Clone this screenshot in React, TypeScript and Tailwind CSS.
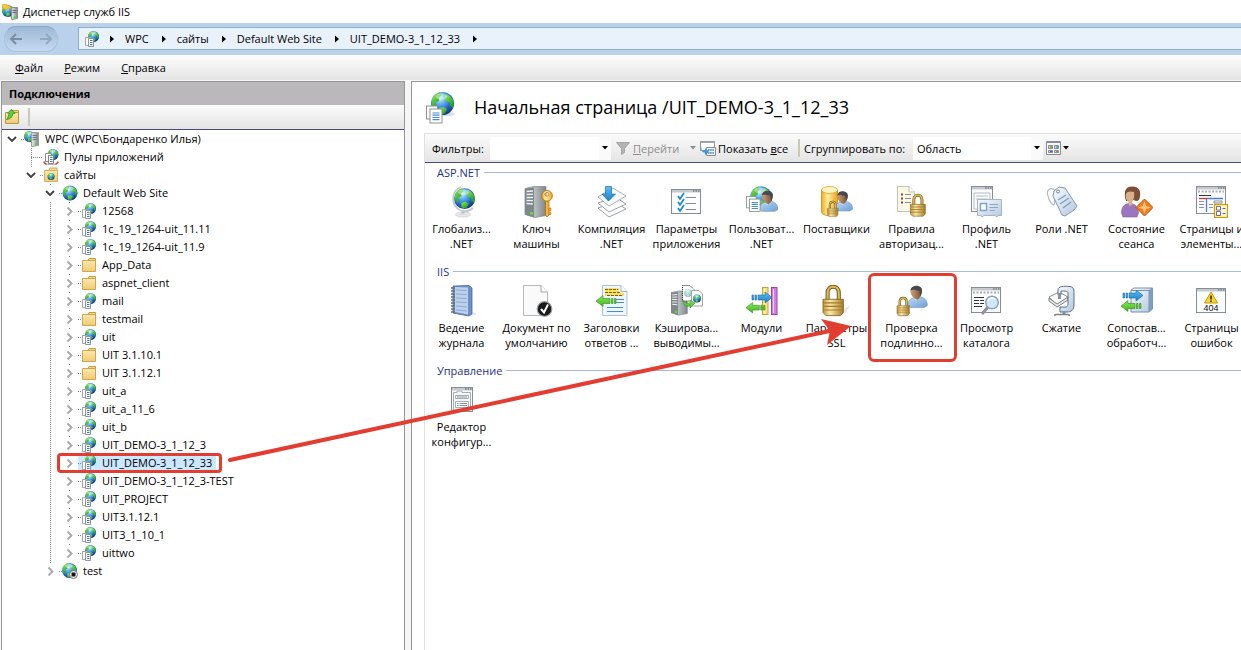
import React from 'react';
import clsx from 'clsx';

/* ---------- shared drawing parts ---------- */

const Defs = () => (
  <svg className="absolute w-0 h-0" aria-hidden="true">
    <defs>
      <radialGradient id="sea" cx="0.38" cy="0.28" r="0.8">
        <stop offset="0" stopColor="#d4f4ff" />
        <stop offset="0.35" stopColor="#55a8ee" />
        <stop offset="0.7" stopColor="#1f58b8" />
        <stop offset="1" stopColor="#122c70" />
      </radialGradient>
      <linearGradient id="land" x1="0" y1="0" x2="0.6" y2="1">
        <stop offset="0" stopColor="#8ff04a" />
        <stop offset="1" stopColor="#1f9a2a" />
      </linearGradient>
      <linearGradient id="gold" x1="0" y1="0" x2="1" y2="0">
        <stop offset="0" stopColor="#c39a3c" />
        <stop offset="0.35" stopColor="#fbe9a8" />
        <stop offset="1" stopColor="#a67c26" />
      </linearGradient>
      <linearGradient id="steel" x1="0" y1="0" x2="1" y2="0">
        <stop offset="0" stopColor="#eceeef" />
        <stop offset="0.5" stopColor="#b4b9bc" />
        <stop offset="1" stopColor="#7f868a" />
      </linearGradient>
      <linearGradient id="shirt" x1="0" y1="0" x2="1" y2="1">
        <stop offset="0" stopColor="#bcdcf6" />
        <stop offset="1" stopColor="#6d9fd4" />
      </linearGradient>
      <linearGradient id="skin" x1="0" y1="0" x2="1" y2="0">
        <stop offset="0" stopColor="#cda076" />
        <stop offset="1" stopColor="#7a5033" />
      </linearGradient>
      <linearGradient id="folder" x1="0" y1="0" x2="0" y2="1">
        <stop offset="0" stopColor="#fbe9ae" />
        <stop offset="1" stopColor="#f0cb70" />
      </linearGradient>
      <linearGradient id="azure" x1="0" y1="0" x2="0" y2="1">
        <stop offset="0" stopColor="#5cc0f2" />
        <stop offset="1" stopColor="#1a7fc8" />
      </linearGradient>
      <linearGradient id="lime" x1="0" y1="0" x2="0" y2="1">
        <stop offset="0" stopColor="#8ae85a" />
        <stop offset="1" stopColor="#3fb51e" />
      </linearGradient>
      <linearGradient id="amber" x1="0" y1="0" x2="1" y2="0">
        <stop offset="0" stopColor="#f5a920" />
        <stop offset="0.4" stopColor="#fff0a0" />
        <stop offset="1" stopColor="#f0a01a" />
      </linearGradient>
      <linearGradient id="glass" x1="0" y1="0" x2="1" y2="1">
        <stop offset="0" stopColor="#f8fbfe" />
        <stop offset="1" stopColor="#b2c9de" />
      </linearGradient>
    </defs>
  </svg>
);

type Part = { x: number; y: number; s?: number };

// unit globe, radius 10 round its own centre
const Globe = ({ x, y, s = 1 }: Part) => (
  <g transform={`translate(${x} ${y}) scale(${s})`}>
    <circle r="10" fill="url(#sea)" />
    <path d="M-9-4C-7-8-4-9.500-2-9.800L-1-7-3-5-3-2-6-1-5 2-7 4-9 1z" fill="url(#land)" />
    <path d="M3-8C7-7 9.600-3 9.800 0L9 4 7 3 6-1 3-2 2-5z" fill="url(#land)" />
    <path d="M-3 4L1 3 4 5 2 9-1 9.600-3 8z" fill="url(#land)" />
    <ellipse cx="-1" cy="-6" rx="5" ry="2.600" fill="#fff" opacity="0.4" />
  </g>
);

// head and shoulders, 19 x 21
const Person = ({ x, y, s = 1 }: Part) => (
  <g transform={`translate(${x} ${y}) scale(${s})`}>
    <path d="M0 18C0 14 3 12 6 11.500L12 10.500C16 11.500 19 14 19 19L16 21H2z" fill="url(#shirt)" stroke="#6c96c2" strokeWidth="0.600" />
    <path d="M5 11.500L8 14.500 12 10.500z" fill="#dcebf8" />
    <path d="M2.500 4C3-1 13-1 13.500 4 13.500 8 12.500 11 9.500 13.500 6.500 13.500 3 10 2.500 6z" fill="url(#skin)" />
    <path d="M2.500 4.500C3-2 13.500-1.500 13.800 4 13.800 7 13 9 12 10L11 5 5.500 3.500z" fill="#454a50" />
  </g>
);

// padlock, 20 x 30
const Lock = ({ x, y, s = 1 }: Part) => (
  <g transform={`translate(${x} ${y}) scale(${s})`}>
    <path d="M4.500 15V8C4.500-.5 15.500-.5 15.500 8V15" fill="none" stroke="#7e5c18" strokeWidth="4" />
    <path d="M4.500 15V8C4.500-.5 15.500-.5 15.500 8V15" fill="none" stroke="#dcbc62" strokeWidth="2" />
    <path d="M0 14H20V27L17 30H3L0 27z" fill="url(#gold)" stroke="#7e5c18" strokeWidth="0.800" />
    <path d="M0 17.500H20M0 21H20M0 24.500H20" stroke="#a27c2c" strokeWidth="1.200" />
  </g>
);

// two overlapping sheets, 16 x 17
const Sheets = ({ x, y, s = 1 }: Part) => (
  <g transform={`translate(${x} ${y}) scale(${s})`}>
    <rect x="0.500" y="0.500" width="11" height="13" fill="#fbfaf4" stroke="#8d9296" />
    <rect x="4" y="3.500" width="12" height="14" fill="#fff" stroke="#8d9296" />
    <path d="M6.500 7.500H13.500M6.500 9.700H13.500M6.500 12H13.500M6.500 14.200H13.500" stroke="#4b8ccb" strokeWidth="1.200" />
  </g>
);

const Tower = ({ x, y, s = 1 }: Part) => (
  <g transform={`translate(${x} ${y}) scale(${s})`}>
    <path d="M0 2L9 0H21V29L10 31 0 28z" fill="url(#steel)" stroke="#7e8488" strokeWidth="0.700" />
    <path d="M0 2L9 1V31L0 28z" fill="#80878b" />
    <path d="M1.500 5L8 4.500M1.500 8L8 7.700M1.500 11L8 11M1.500 14L8 14.200M1.500 17L8 17.500" stroke="#eef0f2" strokeWidth="1.300" />
    <rect x="5" y="25.500" width="3" height="2.500" fill="#59e234" />
  </g>
);

const Frame = ({ x, y, w, h }: { x: number; y: number; w: number; h: number }) => (
  <g>
    <rect x={x + 0.5} y={y + 0.5} width={w - 1} height={h - 1} fill="#fcfdfe" stroke="#878d95" />
    <rect x={x + 1} y={y + 1} width={w - 2} height="2.500" fill="#c5cad1" />
    <path d={`M${x + w - 8} ${y + 2}h1.500m1 0h1.500m1 0h1.500`} stroke="#4a5560" />
  </g>
);

const ArrowRight = ({ x, y, s = 1 }: Part) => (
  <g transform={`translate(${x} ${y}) scale(${s})`} fill="url(#azure)" stroke="#176aa8" strokeWidth="0.600">
    <path d="M0 3.500H1.500V8.500H0zM3 3.500H4.500V8.500H3zM6 3.500H13V0.500L20 6 13 11.500V8.500H6z" />
  </g>
);

const ArrowLeft = ({ x, y, s = 1 }: Part) => (
  <g transform={`translate(${x} ${y}) scale(${s})`} fill="url(#lime)" stroke="#2d8a18" strokeWidth="0.600">
    <path d="M20 3.500H18.500V8.500H20zM17 3.500H15.500V8.500H17zM14 3.500H7V0.500L0 6 7 11.500V8.500H14z" />
  </g>
);

/* ---------- 16px icons ---------- */

const small: Record<string, React.ReactNode> = {
  app: (
    <>
      <Globe x={9.5} y={5.5} s={0.55} />
      <path d="M1.500 6.500H6.500V14.500H1.500z" fill="#fff" stroke="#a1a5a8" />
      <path d="M4.500 7.500H9.500V15.500H4.500z" fill="#fff" stroke="#8f9498" />
      <path d="M6 9.500H8.500M6 11.500H8.500M6 13.500H8.500" stroke="#3b79c4" />
    </>
  ),
  folder: (
    <>
      <path d="M7 3.500L8 1.500H14.500V6H7z" fill="#f3d68a" stroke="#c79a3a" />
      <path d="M9 3.500H13" stroke="#fff" />
      <path d="M1.500 3.500H14.500V14.500H1.500z" fill="url(#folder)" stroke="#cfa452" />
    </>
  ),
  sites: (
    <>
      <path d="M6 3L7 1H14V4H6z" fill="#f7e0a0" stroke="#cfa452" />
      <path d="M1.500 3.500H14.500V14.500H1.500z" fill="url(#folder)" stroke="#d7b25f" />
      <Globe x={8} y={9.500} s={0.35} />
    </>
  ),
  globe: <Globe x={8} y={8} s={0.75} />,
  stopped: (
    <>
      <Globe x={7.5} y={7.500} s={0.75} />
      <circle cx="11.500" cy="11.500" r="4" fill="#fff" stroke="#777" />
      <rect x="9.500" y="9.500" width="4" height="4" fill="#111" />
    </>
  ),
  server: (
    <>
      <Globe x={5.500} y={5.500} s={0.55} />
      <path d="M7.500 2.500L9 1.500H14.500V14.500L7.500 15.500z" fill="url(#steel)" stroke="#9a9fa3" />
      <path d="M8.500 4.500H13.500M8.500 6.500H13.500M8.500 8.500H13.500" stroke="#767d82" />
      <rect x="11" y="12" width="2" height="2" fill="#4edb2d" />
    </>
  ),
  pools: (
    <>
      <Globe x={10} y={5.500} s={0.55} />
      <path d="M2.500 4.500H8.500V12.500H2.500z" fill="#fff" stroke="#8a8f94" />
      <path d="M5.500 6.500H10.500V14.500H5.500z" fill="#fff" stroke="#7d8287" />
      <path d="M7 8.500H9.500M7 10.500H9.500M7 12.500H9.500" stroke="#3b79c4" />
      <path d="M1 12C1 17 15 17 15 12" fill="none" stroke="#a4a8ac" />
      <path d="M0.500 13L3.500 15.500M15.500 13L12.500 15.500" stroke="#d8452e" strokeWidth="1.500" />
    </>
  ),
  titleApp: (
    <>
      <Globe x={6} y={7} s={0.6} />
      <path d="M0 1L3 0 8 2 9 5 6 4 4 6 0 4z" fill="#f5c63c" stroke="#c08a1c" strokeWidth="0.500" />
      <path d="M9.500 4.500L11 3.500H15.500V14.500L9.500 15.500z" fill="url(#steel)" stroke="#868c90" />
      <path d="M10.500 6.500H14.500M10.500 8.500H14.500" stroke="#666d72" />
      <rect x="12" y="12" width="2" height="2" fill="#4edb2d" />
    </>
  ),
  connect: (
    <>
      <path d="M7 3.500L8 1.500H14.500V6H7z" fill="#f3d68a" stroke="#c79a3a" />
      <path d="M1.500 3.500H14.500V14.500H1.500z" fill="url(#folder)" stroke="#b9964a" />
      <path d="M2.500 10.500C4.500 9.500 4 5 5.500 4.500L3.500 4 7.500 0.500 11 4.500 9 4.500C8.500 8 6 10.500 2.500 10.500z" fill="#5cd038" stroke="#2a7f17" strokeWidth="0.700" />
    </>
  ),
  funnel: <path d="M1.500 2.500H14.500L9.500 8.500V12.500L6.500 14.500V8.500z" fill="#b4b4b6" stroke="#a4a4a6" />,
  showAll: (
    <>
      <path d="M0.500 1.500H14.500V10.500H0.500z" fill="#fff" stroke="#8c939b" />
      <path d="M0 2H15" stroke="#9aa2ac" strokeWidth="2" />
      <path d="M6.500 7.500H15.500V15.500H6.500z" fill="#f2f5f9" stroke="#838a92" />
      <path d="M8 10H14.500M8 13H14.500" stroke="#3c6fb5" strokeWidth="1.500" strokeDasharray="1.500 0.700" />
      <path d="M2 6.500V10.500H5V8L9 11.500 5 15V12.500C2 12.500 0.500 10 2 6.500z" fill="url(#azure)" />
    </>
  ),
  tiles: (
    <>
      <path d="M0.500 1.500H14.500V14.500H0.500z" fill="#f7f8fa" stroke="#868c95" />
      <path d="M0.500 2.500H14.500" stroke="#868c95" />
      <path d="M2.500 5.500H6.500V8.500H2.500zM8.500 5.500H12.500V8.500H8.500zM2.500 10.500H6.500V12.500H2.500zM8.500 10.500H12.500V12.500H8.500z" fill="#d7dce4" stroke="#858b93" />
      <rect x="4" y="6" width="2" height="2" fill="#83b83a" />
      <rect x="10" y="6" width="2" height="2" fill="#55b0dc" />
      <rect x="4" y="11" width="2" height="1" fill="#654bb5" />
      <rect x="10" y="11" width="2" height="1" fill="#e2733d" />
    </>
  ),
};

const Icon16 = ({ name }: { name: string }) => (
  <svg viewBox="0 0 16 16" className="w-4 h-4 shrink-0" aria-hidden="true">
    {small[name]}
  </svg>
);

/* ---------- 32px icons ---------- */

const large: Record<string, React.ReactNode> = {
  home: (
    <>
      <ellipse cx="21" cy="22" rx="8" ry="2" fill="#dcdfe2" />
      <Globe x={16.5} y={11.5} s={1.150} />
      <Sheets x={0} y={13.500} />
    </>
  ),
  globalization: (
    <>
      <ellipse cx="17" cy="28.500" rx="7.500" ry="2.500" fill="#e4e6e8" stroke="#c3c7ca" strokeWidth="0.600" />
      <path d="M17 28V24" stroke="#c2c7cb" strokeWidth="3" />
      <path d="M15 1C5 4 4 20 15 24.500 20 26 24 25 27 22" fill="none" stroke="#c5cace" strokeWidth="1.800" />
      <Globe x={18.5} y={12.500} s={1.050} />
    </>
  ),
  key: (
    <>
      <Tower x={4} y={0.500} />
      <path d="M24.500 13H28V29L26 31 24.500 29z" fill="#f7b436" stroke="#a8670c" strokeWidth="0.700" />
      <path d="M28 22H30V25H28zM28 26.500H30V28.500H28z" fill="#f7b436" stroke="#a8670c" strokeWidth="0.500" />
      <path d="M26 4.500A5.300 5.300 0 1 0 26.100 4.500M26 6.500A1.800 1.800 0 1 1 25.900 6.500" fill="url(#amber)" fillRule="evenodd" stroke="#a8670c" strokeWidth="0.800" />
    </>
  ),
  compile: (
    <>
      <path d="M2 22L13 31 30 23 19 16z" fill="#fff" stroke="#9da3a8" />
      <path d="M2 17L13 26 30 18 19 11z" fill="#fff" stroke="#9da3a8" />
      <path d="M2 11L13 20 30 10 17 2z" fill="#fafbfc" stroke="#a9afb4" />
      <path d="M9.500 0.500H15.500V8H19.500L12.500 15 6 8H9.500z" fill="url(#azure)" stroke="#1a6db0" strokeWidth="0.700" />
    </>
  ),
  settings: (
    <>
      <Frame x={0} y={3} w={30} h={25} />
      <path d="M7 10L9 13 13 7M7 16L9 19 13 13M7 22L9 25 13 19" fill="none" stroke="#2487c9" strokeWidth="1.800" />
      <path d="M14.500 11.500H25M14.500 17.500H25M14.500 23.500H25" stroke="#8389a5" />
    </>
  ),
  users: (
    <>
      <Globe x={15} y={11} s={1.080} />
      <Person x={13.5} y={5} s={0.970} />
      <Sheets x={0} y={10} s={0.880} />
    </>
  ),
  providers: (
    <>
      <path d="M0.500 4V26C1 31 16 31 16.500 26V4z" fill="url(#amber)" stroke="#c5820f" strokeWidth="0.700" />
      <ellipse cx="8.500" cy="4" rx="8" ry="3.500" fill="#fff4bd" stroke="#d9981a" strokeWidth="0.700" />
      <Person x={14} y={5.5} s={0.930} />
      <Lock x={6.5} y={15} s={0.520} />
    </>
  ),
  rules: (
    <>
      <path d="M1.500 0.500H13L18.500 6V25.500H1.500z" fill="#fbf8e6" stroke="#c4c1ac" />
      <path d="M13 0.500V6H18.500" fill="#fff" stroke="#c4c1ac" />
      <path d="M5 8.500H7M5 12.500H7M5 16.500H7" stroke="#555" strokeWidth="2" />
      <path d="M9 8.500H15M9 12.500H15M9 16.500H15" stroke="#8b8b98" />
      <Lock x={14.5} y={8} s={0.740} />
    </>
  ),
  profile: (
    <>
      <Frame x={0} y={0} w={22} h={26} />
      <path d="M3 7H19V23H3zM5 10H17M5 13H17" fill="none" stroke="#b4bac2" />
      <path d="M6.500 13.500H30.500V29.500H27L26 31 24 29.500H13L11 31 10 29.500H6.500z" fill="url(#glass)" stroke="#a9b4c0" />
      <path d="M9.500 17.500H15.500V24.500H9.500z" fill="#fff" stroke="#7fa4cf" strokeWidth="1.500" />
      <path d="M18.500 18.500H27M18.500 21.500H27M18.500 24.500H24" stroke="#8fa6c0" />
    </>
  ),
  roles: (
    <>
      <path d="M10 5C4 0 0 4 2 10 3 15 6 19 8 19 10 16 7 9 11 6" fill="none" stroke="#b0b8c0" strokeWidth="1.200" />
      <path d="M8 5L13 1 19 2 31 20 28 24 19 30 16 29 7 10z" fill="url(#glass)" stroke="#8497aa" />
      <circle cx="12" cy="5.500" r="1.500" fill="#fff" stroke="#74889d" />
      <path d="M12 14L20 9M14 18L23 12M17 22L25 16" stroke="#7f9cbf" strokeWidth="1.300" />
    </>
  ),
  session: (
    <>
      <path d="M0.500 27C0.500 20 4 18 8 17.500 13 17 17 20 17.500 27L16 31H2z" fill="#9b76c0" stroke="#7c5aa0" strokeWidth="0.600" />
      <path d="M5 15C2 5 5 0.500 11 0.500 18 0.500 20 5 19 10 19 13 17.500 15 15.500 15L12 14z" fill="#7d4f35" />
      <path d="M5 8C6 5 10 5 13 6 14 11 12 15 11 16L11.500 19 8 20 7.500 16C5 14 4.500 11 5 8z" fill="#d9b08a" />
      <path d="M23.500 13L32 21.500 23.500 30 15 21.500z" fill="#f07f1c" stroke="#b8500a" />
      <path d="M23.500 15L25.500 21.500 23.500 28 21.500 21.500zM17 21.500L23.500 19.500 30 21.500 23.500 23.500z" fill="#ffc27a" />
    </>
  ),
  pages: (
    <>
      <Frame x={0} y={0} w={30} h={28} />
      <path d="M2 5.500H28" stroke="#a9aeb3" strokeWidth="2" strokeDasharray="2 1.500" />
      <path d="M3 9.500H15" stroke="#333" />
      <path d="M3 12.500H12" stroke="#d33" strokeWidth="1.300" />
      <path d="M12 12.500H27M10.500 13V26" stroke="#4b7fe0" strokeWidth="1.300" />
      <path d="M3 15.500H8M3 18.500H8M3 21.500H8M13 18.500H17M13 21.500H17" stroke="#8a8fb0" />
      <path d="M18 15H26V17H18z" fill="#fff" stroke="#8a8f95" />
      <rect x="18.500" y="18.500" width="13" height="13" fill="#fdf6cf" stroke="#c8a300" strokeWidth="1.300" />
      <path d="M20.500 20.500H24.500V24H20.500zM20.500 25.500H24.500V29.500H20.500z" fill="#fff" stroke="#776689" />
      <path d="M26.500 22.500H29.500M26.500 27.500H29.500" stroke="#3f6cc7" />
    </>
  ),
  journal: (
    <>
      <path d="M27 27L31 29 26 31z" fill="#e3e4e6" />
      <path d="M7 1L23 0.500 26 3V29L23 31 7 28z" fill="#6d90c4" stroke="#4a6899" strokeWidth="0.800" />
      <path d="M9 2L22 2.500V29.500L9 27z" fill="#bdd1ec" />
      <path d="M10 5L21 5.500M10 9L21 9.500M10 13L21 13.500M10 17L21 17.500M10 21L21 22M10 25L21 26" stroke="#8eabd8" />
      <path d="M5 3H9M5 6H9M5 9H9M5 12H9M5 15H9M5 18H9M5 21H9M5 24H9M5 27H9" stroke="#6b727a" strokeWidth="1.400" />
    </>
  ),
  document: (
    <>
      <path d="M2.500 0.500H20L26.500 7V30.500H2.500z" fill="#fafafb" stroke="#b5b8bb" />
      <path d="M20 0.500V7H26.500" fill="#fff" stroke="#a0a3a6" />
      <circle cx="23.500" cy="24" r="7.300" fill="#18191a" stroke="#9b9ea0" strokeWidth="1.200" />
      <path d="M20 24L23 27.500 27 19.500" fill="none" stroke="#fff" strokeWidth="2" />
    </>
  ),
  headers: (
    <>
      <path d="M6.500 0.500H25L31 6.500V30.500H6.500z" fill="#edf6fb" stroke="#b3c0c8" />
      <path d="M25 0.500V6.500H31" fill="#fff" stroke="#a5b4bd" />
      <path d="M9 3H23V8H28V11H9z" fill="#f7df63" />
      <path d="M9 4.500H22M9 7.500H24M11 10.500H27" stroke="#73662a" strokeDasharray="3 1" />
      <path d="M20 14.500H28M20 17.500H28M11 22.500H27M11 26.500H27" stroke="#4b8ccf" strokeWidth="1.200" />
      <ArrowLeft x={0} y={10} />
    </>
  ),
  cache: (
    <>
      <Tower x={0} y={6} s={0.780} />
      <path d="M11.500 0.500H19L23.500 5V16H11.500z" fill="#fff" stroke="#222" strokeDasharray="1 1" />
      <g opacity="0.400"><Globe x={17} y={8} s={0.400} /></g>
      <path d="M20.500 5.500H28L31.500 9V21H20.500z" fill="#fff" stroke="#9fa4a9" />
      <Globe x={26} y={13.500} s={0.400} />
      <path d="M12 15C14 19 17 19 19 17.500V15L24 18 19 23V21C15 22 12 20 12 15z" fill="url(#lime)" stroke="#2d8a18" strokeWidth="0.500" />
    </>
  ),
  modules: (
    <>
      <rect x="16.500" y="2.500" width="5.500" height="27" fill="#f6e489" stroke="#c3a42c" />
      <rect x="25.500" y="2.500" width="5.500" height="27" fill="#d57fdd" stroke="#9c42ab" />
      <path d="M18.500 4V28M27.500 4V28" stroke="#fff" opacity="0.600" />
      <ArrowRight x={6} y={6.500} />
      <ArrowLeft x={0} y={17} s={0.950} />
    </>
  ),
  ssl: (
    <>
      <path d="M22 24L29 21 24 29z" fill="#e6e6e6" />
      <Lock x={2} y={0} s={1.020} />
    </>
  ),
  auth: (
    <>
      <Person x={12} y={1} s={1.020} />
      <ellipse cx="8" cy="30.500" rx="7" ry="1" fill="#dfe1e3" />
      <Lock x={1} y={12} s={0.620} />
    </>
  ),
  browse: (
    <>
      <Frame x={0} y={2} w={30} h={26} />
      <path d="M2 7.500H28" stroke="#a9aeb3" strokeWidth="2" strokeDasharray="2 1.500" />
      <path d="M3 12.500H13M3 15.500H8M9 15.500H13M3 18.500H8M9 18.500H13M3 21.500H11" stroke="#333" />
      <path d="M17 22L11 29" stroke="#8d9299" strokeWidth="3" />
      <circle cx="21" cy="17.500" r="6.300" fill="#cfe7fa" stroke="#8fa1b4" strokeWidth="1.500" />
      <path d="M17 16C18 13 21 12 24 14" fill="none" stroke="#fff" strokeWidth="1.500" />
    </>
  ),
  compression: (
    <>
      <path d="M3 12L13 7 22 12 11 20z" fill="#fff" stroke="#8b9094" />
      <path d="M3 13V16L11 22 22 15V12L11 19z" fill="#e5e7e9" stroke="#7b8084" />
      <path d="M12 10V5C12 1 18 1 24 1.500 28 2 28 5 28 9V20C28 25 25 27 21 27H14V22H19C22 22 22 20 22 18V8C22 6 19 6 15 6V10z" fill="url(#glass)" stroke="#5f6f80" />
      <path d="M13.500 8V14M18 26V30" stroke="#8593a2" strokeWidth="3" />
      <path d="M8 30.500L10 29.500H22L24 30.500" fill="none" stroke="#7c828a" strokeWidth="1.500" />
    </>
  ),
  handlers: (
    <>
      <path d="M10 5L13 3H31.500V24L28 27H10z" fill="url(#glass)" stroke="#7b90aa" />
      <path d="M10 5.500H28V27M28 5.500L31 3" fill="none" stroke="#7b90aa" />
      <path d="M28 5.500L31.500 3V24L28 27z" fill="#7f9dc0" />
      <ArrowRight x={2} y={4.500} />
      <ArrowLeft x={0} y={15} />
    </>
  ),
  errors: (
    <>
      <Frame x={0} y={3} w={30} h={25} />
      <path d="M15 7L21.500 18H8.500z" fill="#fcd62c" stroke="#c79a08" strokeLinejoin="round" />
      <path d="M15 10.500V14.500M15 15.500V17" stroke="#222" strokeWidth="1.500" />
      <text x="15" y="26" textAnchor="middle" fontSize="9" fontFamily="Liberation Sans, sans-serif" fill="#111">404</text>
    </>
  ),
  config: (
    <>
      <Frame x={5} y={3} w={22} h={25} />
      <path d="M7.500 8.500H11V7H16V8.500H24.500V26H7.500z" fill="#f6f8fa" stroke="#a8adb5" />
      <path d="M9.500 11.500H22.500V14.500H9.500zM9.500 17.500H22.500V23.500H9.500z" fill="#fff" stroke="#a8adb5" />
      <path d="M11 13H21M13.500 19.500H21M13.500 21.500H21" stroke="#878d95" />
      <path d="M11 19.500H12.500M11 21.500H12.500" stroke="#36a3d9" />
    </>
  ),
};

const Icon32 = ({ name }: { name: string }) => (
  <svg viewBox="0 0 32 32" className="w-8 h-8 shrink-0" aria-hidden="true">
    {large[name]}
  </svg>
);

/* ---------- data ---------- */

type TreeNode = {
  label: string;
  icon: string;
  open?: boolean;
  leaf?: boolean;
  selected?: boolean;
  children?: TreeNode[];
};

const tree: TreeNode[] = [
  {
    label: 'WPC (WPC\\Бондаренко Илья)',
    icon: 'server',
    open: true,
    children: [
      { label: 'Пулы приложений', icon: 'pools', leaf: true },
      {
        label: 'сайты',
        icon: 'sites',
        open: true,
        children: [
          {
            label: 'Default Web Site',
            icon: 'globe',
            open: true,
            children: [
              { label: '12568', icon: 'app' },
              { label: '1c_19_1264-uit_11.11', icon: 'app' },
              { label: '1c_19_1264-uit_11.9', icon: 'app' },
              { label: 'App_Data', icon: 'folder' },
              { label: 'aspnet_client', icon: 'folder' },
              { label: 'mail', icon: 'app' },
              { label: 'testmail', icon: 'folder' },
              { label: 'uit', icon: 'app' },
              { label: 'UIT 3.1.10.1', icon: 'folder' },
              { label: 'UIT 3.1.12.1', icon: 'folder' },
              { label: 'uit_a', icon: 'app' },
              { label: 'uit_a_11_6', icon: 'app' },
              { label: 'uit_b', icon: 'app' },
              { label: 'UIT_DEMO-3_1_12_3', icon: 'app' },
              { label: 'UIT_DEMO-3_1_12_33', icon: 'app', selected: true },
              { label: 'UIT_DEMO-3_1_12_3-TEST', icon: 'app' },
              { label: 'UIT_PROJECT', icon: 'app' },
              { label: 'UIT3.1.12.1', icon: 'app' },
              { label: 'UIT3_1_10_1', icon: 'app' },
              { label: 'uittwo', icon: 'app' },
            ],
          },
          { label: 'test', icon: 'stopped' },
        ],
      },
    ],
  },
];

type Feature = { lines: string[]; icon: string; marked?: boolean };

const groups: { title: string; items: Feature[] }[] = [
  {
    title: 'ASP.NET',
    items: [
      { lines: ['Глобализ...', '.NET'], icon: 'globalization' },
      { lines: ['Ключ', 'машины'], icon: 'key' },
      { lines: ['Компиляция', '.NET'], icon: 'compile' },
      { lines: ['Параметры', 'приложения'], icon: 'settings' },
      { lines: ['Пользоват...', '.NET'], icon: 'users' },
      { lines: ['Поставщики'], icon: 'providers' },
      { lines: ['Правила', 'авторизац...'], icon: 'rules' },
      { lines: ['Профиль', '.NET'], icon: 'profile' },
      { lines: ['Роли .NET'], icon: 'roles' },
      { lines: ['Состояние', 'сеанса'], icon: 'session' },
      { lines: ['Страницы и', 'элементы...'], icon: 'pages' },
    ],
  },
  {
    title: 'IIS',
    items: [
      { lines: ['Ведение', 'журнала'], icon: 'journal' },
      { lines: ['Документ по', 'умолчанию'], icon: 'document' },
      { lines: ['Заголовки', 'ответов ...'], icon: 'headers' },
      { lines: ['Кэширова...', 'выводимы...'], icon: 'cache' },
      { lines: ['Модули'], icon: 'modules' },
      { lines: ['Параметры', 'SSL'], icon: 'ssl' },
      { lines: ['Проверка', 'подлинно...'], icon: 'auth', marked: true },
      { lines: ['Просмотр', 'каталога'], icon: 'browse' },
      { lines: ['Сжатие'], icon: 'compression' },
      { lines: ['Сопостав...', 'обработч...'], icon: 'handlers' },
      { lines: ['Страницы', 'ошибок'], icon: 'errors' },
    ],
  },
  {
    title: 'Управление',
    items: [{ lines: ['Редактор', 'конфигур...'], icon: 'config' }],
  },
];

const crumbs = ['WPC', 'сайты', 'Default Web Site', 'UIT_DEMO-3_1_12_33'];

/* ---------- pieces ---------- */

const Caret = ({ className }: { className?: string }) => (
  <svg viewBox="0 0 6 4" className={clsx('w-[6px] h-1 shrink-0', className)} aria-hidden="true">
    <path d="M0 0H6L3 3.500z" fill="currentColor" />
  </svg>
);

const CrumbArrow = () => (
  <svg viewBox="0 0 4 8" className="w-1 h-2 ml-[10px] mt-px" aria-hidden="true">
    <path d="M0 0.500L4 4L0 7.500z" />
  </svg>
);

const Chevron = ({ open }: { open?: boolean }) => (
  <svg viewBox="0 0 10 10" className={clsx('w-[10px] h-[10px]', open ? 'text-[#404040]' : 'text-[#a6a6a6]')} aria-hidden="true">
    <path d={open ? 'M1 3L5 7L9 3' : 'M3.500 1.500L7.500 5.500L3.500 9.500'} fill="none" stroke="currentColor" strokeWidth="1.800" />
  </svg>
);

const TreeItem = ({ node, last, root }: { node: TreeNode; last?: boolean; root?: boolean }) => (
  <li className="relative">
    {!root && (
      <span
        className={clsx(
          'absolute left-[5px] top-0 w-px bg-[repeating-linear-gradient(to_bottom,#8a8a8a_0_1px,transparent_1px_2px)]',
          last ? 'h-[9px]' : 'h-full',
        )}
      />
    )}
    <div className="relative flex items-center h-[18px]">
      {node.leaf ? (
        <span className="ml-[5px] w-3 h-px bg-[repeating-linear-gradient(to_right,#8a8a8a_0_1px,transparent_1px_2px)]" />
      ) : (
        <button className="w-[10px] h-4 mr-1 bg-white flex items-center justify-center" aria-label={node.label}>
          <Chevron open={node.open} />
        </button>
      )}
      <button className={clsx('flex items-center h-[18px] pr-1 whitespace-nowrap', node.selected && 'bg-[#cce8ff]')}>
        {!node.leaf && <span className="w-[3px] h-px bg-[repeating-linear-gradient(to_right,#8a8a8a_0_1px,transparent_1px_2px)]" />}
        <Icon16 name={node.icon} />
        <span className="ml-[5px] pb-[2px]">{node.label}</span>
      </button>
      {node.selected && (
        <span className="absolute -left-[7px] -top-px w-[165px] h-5 rounded border-[3px] border-[#e33c30]" />
      )}
    </div>
    {node.children && (
      <ul className="pl-[19px]">
        {node.children.map((child, i) => (
          <TreeItem key={child.label} node={child} last={i === node.children!.length - 1} />
        ))}
      </ul>
    )}
  </li>
);

const Separator = () => <span className="w-[2px] h-[18px] bg-[#c9c9b8]" />;

export default function App() {
  return (
    <div className="relative flex flex-col h-screen overflow-hidden bg-[#f7f6f7] text-black text-[11px] leading-[15px] font-['Open_Sans','Noto_Sans',sans-serif]">
      <Defs />

      {/* Title bar */}
      <header className="flex items-center h-[23px] pl-[2px] gap-[5px] bg-white shrink-0">
        <Icon16 name="titleApp" />
        <h1>Диспетчер служб IIS</h1>
      </header>

      {/* Address bar */}
      <nav className="flex items-center h-8 pb-px bg-[#b9d1ea] shrink-0">
        <div className="flex items-center justify-between w-[54px] h-[26px] ml-1 mr-5 px-1 rounded-xl bg-gradient-to-b from-[#9db8d6] to-[#c6daf0] border border-[#a9c2de] border-t-[#8aa6c6] text-[#7b8ea5]">
          <button aria-label="Назад">
            <svg viewBox="0 0 14 12" className="w-[14px] h-3"><path d="M7 1L2 6L7 11M2 6H13" fill="none" stroke="currentColor" strokeWidth="2" /></svg>
          </button>
          <button aria-label="Вперед">
            <svg viewBox="0 0 14 12" className="w-[14px] h-3"><path d="M7 1L12 6L7 11M12 6H1" fill="none" stroke="#93a9c2" strokeWidth="2" /></svg>
          </button>
        </div>
        <div className="flex items-center flex-1 h-[23px] pl-[5px] border border-r-0 border-[#8fb0d0] bg-[#e9f1fa]">
          <Icon16 name="app" />
          {crumbs.map((crumb) => (
            <React.Fragment key={crumb}>
              <CrumbArrow />
              <button className="ml-[11px] mr-[3px] pb-px">{crumb}</button>
            </React.Fragment>
          ))}
          <CrumbArrow />
        </div>
      </nav>

      {/* Menu */}
      <div className="flex items-center h-[25px] pl-[15px] gap-[21px] bg-gradient-to-b from-[#fdfdfd] to-[#e5e4e5] shrink-0">
        <button><u>Ф</u>айл</button>
        <button><u>Р</u>ежим</button>
        <button><u>С</u>правка</button>
      </div>

      <div className="flex flex-1 gap-[6px] pt-px pl-px min-h-0">
        {/* Connections */}
        <aside className="flex flex-col w-[404px] shrink-0 bg-white border border-b-0 border-[#979797]">
          <h2 className="flex items-center h-[23px] pl-[7px] font-bold bg-[#bab8ba] shrink-0">Подключения</h2>
          <div className="flex items-center h-[25px] pl-[2px] gap-2 bg-gradient-to-b from-[#fbfbfb] to-[#e5e4e5] border-b border-[#4a4a78] shrink-0">
            <button aria-label="Создать подключение"><Icon16 name="connect" /></button>
            <Separator />
          </div>
          <ul className="pl-[5px]">
            {tree.map((node) => (
              <TreeItem key={node.label} node={node} root />
            ))}
          </ul>
        </aside>

        {/* Feature view */}
        <main className="flex flex-col flex-1 min-w-0 bg-white border border-r-0 border-b-0 border-[#979797]">
          <div className="flex items-center h-[51px] pl-[14px] gap-4 shrink-0">
            <Icon32 name="home" />
            <h2 className="pb-[2px] text-lg whitespace-nowrap">Начальная страница /UIT_DEMO-3_1_12_33</h2>
          </div>

          <div className="flex flex-col flex-1 ml-3 border-l border-t border-[#e0e0e0] min-h-0">
            <div className="flex items-center h-[29px] pl-[7px] bg-gradient-to-b from-[#fbfbfb] to-[#e5e4e5] border-b border-[#4a4a78] whitespace-nowrap shrink-0">
              <label htmlFor="filter" className="w-[58px]">Фильтры:</label>
              <div className="flex items-center w-[121px] h-[23px] bg-white">
                <input id="filter" className="flex-1 min-w-0 h-full px-1 outline-none" />
                <button className="flex items-center justify-center w-3 h-full bg-[#fafafa]" aria-label="Список фильтров"><Caret /></button>
              </div>
              <button className="flex items-center gap-[2px] ml-1 w-[81px] text-[#8d8d8d]" disabled>
                <Icon16 name="funnel" />
                <span><u>П</u>ерейти</span>
                <Caret className="ml-auto" />
              </button>
              <button className="flex items-center gap-[2px] ml-1 w-[98px]">
                <Icon16 name="showAll" />
                <span>Показать <u>в</u>се</span>
              </button>
              <Separator />
              <label htmlFor="grouping" className="ml-1 w-[109px]">Сгруппировать по:</label>
              <div className="relative w-[130px] h-[23px]">
                <select id="grouping" className="appearance-none w-full h-full pl-1 bg-white outline-none">
                  <option>Область</option>
                </select>
                <span className="absolute right-0 top-0 flex items-center justify-center w-3 h-full bg-[#fafafa] pointer-events-none"><Caret /></span>
              </div>
              <button className="flex items-center gap-px ml-[3px]" aria-label="Вид">
                <Icon16 name="tiles" />
                <Caret />
              </button>
            </div>

            {groups.map((group) => (
              <section key={group.title} className="h-[99px] pt-px">
                <div className="flex items-center h-4 pl-3 gap-1">
                  <h3 className="text-[#1e3287]">{group.title}</h3>
                  <span className="flex-1 h-px bg-[#a9b9dc]" />
                </div>
                <div className="flex pt-[6px] -ml-px">
                  {group.items.map((item) => (
                    <button key={item.icon} className="relative flex flex-col items-center w-[75px] shrink-0 text-center whitespace-nowrap">
                      <Icon32 name={item.icon} />
                      <span className="mt-[3px]">
                        {item.lines.map((line) => (
                          <span key={line} className="block">{line}</span>
                        ))}
                      </span>
                      {item.marked && (
                        <span className="absolute -left-[6px] -top-3 w-[89px] h-[89px] rounded-md border-[3px] border-[#e33c30]" />
                      )}
                    </button>
                  ))}
                </div>
              </section>
            ))}
          </div>
        </main>
      </div>

      {/* Pointer from the tree node to the feature */}
      <svg viewBox="0 0 624 146" className="absolute left-[228px] top-[318px] w-[624px] h-[146px] pointer-events-none" aria-hidden="true">
        <path d="M2 142L606 12" stroke="#e33c30" strokeWidth="4" strokeLinecap="round" />
        <path d="M623 8L593 1L602 13L599 27z" fill="#e33c30" />
      </svg>
    </div>
  );
}
